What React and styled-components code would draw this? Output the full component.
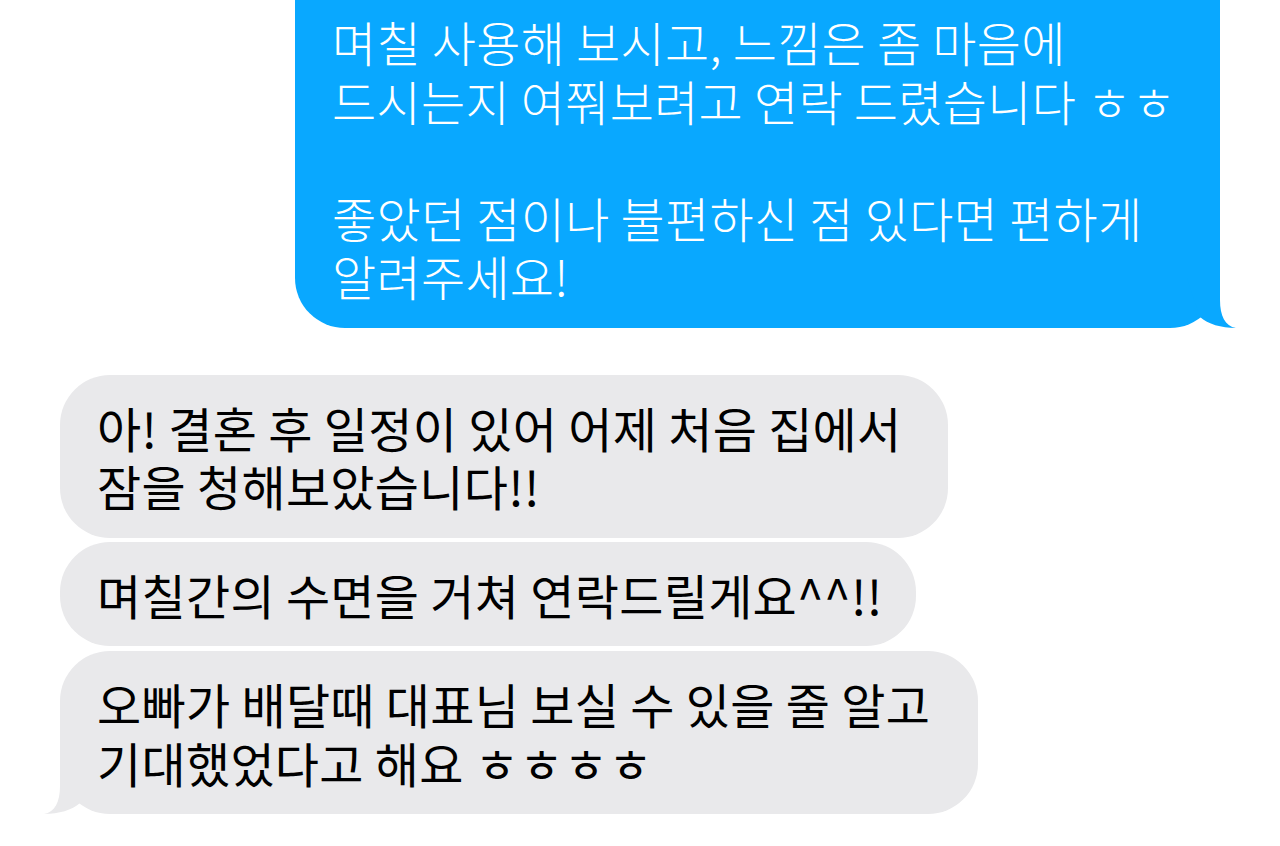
import React from "react";
import styled, { createGlobalStyle } from "styled-components";

const Global = createGlobalStyle`
  html, body { margin: 0; padding: 0; background: #ffffff; }
  body { overflow: hidden; }
`;

const BLUE = "#09a8ff";
const GRAY = "#e9e9eb";

const Page = styled.div`
  width: 1280px;
  height: 846px;
  overflow: hidden;
  background: #fff;
  display: flex;
  flex-direction: column;
  padding: 0 60px;
  box-sizing: border-box;
  font-family: "Noto Sans CJK KR", "Noto Sans", sans-serif;
`;

const Bubble = styled.div`
  position: relative;
  box-sizing: border-box;
  width: ${(p) => p.$width}px;
  padding: ${(p) => p.$padTop || 23}px 20px 23px 37px;
  border-radius: 50px;
  font-size: 48px;
  font-weight: ${(p) => (p.$me ? 300 : 400)};
  line-height: 58.5px;
  letter-spacing: 0.3px;
  white-space: nowrap;
  background: ${(p) => (p.$me ? BLUE : GRAY)};
  color: ${(p) => (p.$me ? "#ffffff" : "#000000")};
  align-self: ${(p) => (p.$me ? "flex-end" : "flex-start")};
  margin-top: ${(p) => p.$gap || 0}px;
`;

const Line = styled.div`
  min-height: 58.5px;
`;

const Tail = styled.svg`
  position: absolute;
  bottom: 0;
  width: 50px;
  height: 50px;
  ${(p) => (p.$side === "right" ? "right: -17px;" : "left: -17px; transform: scaleX(-1);")}
`;

function BubbleTail({ side, color }) {
  return (
    <Tail $side={side} viewBox="0 0 50 50">
      <path
        d="M0 0 L33 0 L33 22 C33 38 38 48 49 50 C34 50 21 46 13 39 Z"
        fill={color}
      />
    </Tail>
  );
}

export default function App() {
  return (
    <>
      <Global />
      <Page>
        <Bubble $me $width={925} $gap={-71} $padTop={83}>
          <Line>며칠 사용해 보시고, 느낌은 좀 마음에</Line>
          <Line>드시는지 여쭤보려고 연락 드렸습니다 ㅎㅎ</Line>
          <Line />
          <Line>좋았던 점이나 불편하신 점 있다면 편하게</Line>
          <Line>알려주세요!</Line>
          <BubbleTail side="right" color={BLUE} />
        </Bubble>
        <Bubble $width={888} $gap={47}>
          <Line>아! 결혼 후 일정이 있어 어제 처음 집에서</Line>
          <Line>잠을 청해보았습니다!!</Line>
        </Bubble>
        <Bubble $width={856} $gap={4}>
          <Line>며칠간의 수면을 거쳐 연락드릴게요^^!!</Line>
        </Bubble>
        <Bubble $width={918} $gap={5}>
          <Line>오빠가 배달때 대표님 보실 수 있을 줄 알고</Line>
          <Line>기대했었다고 해요 ㅎㅎㅎㅎ</Line>
          <BubbleTail side="left" color={GRAY} />
        </Bubble>
      </Page>
    </>
  );
}
